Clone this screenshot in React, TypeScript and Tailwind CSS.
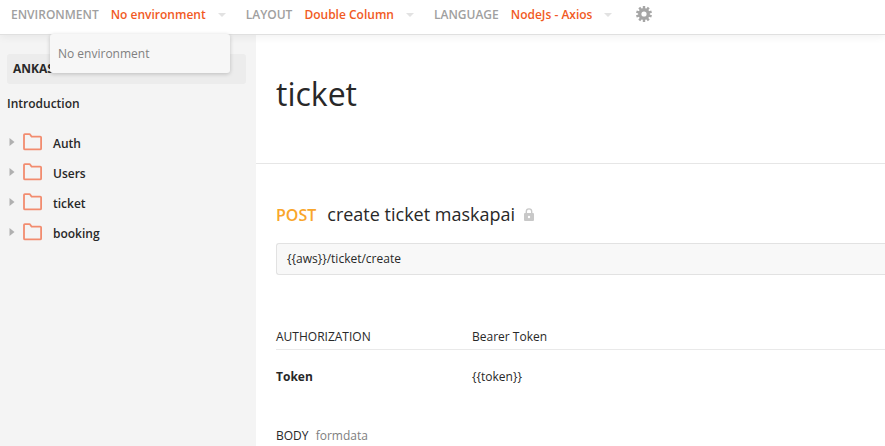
import type { ReactNode } from "react";

const folders = ["Auth", "Users", "ticket", "booking"];

function Caret() {
  return (
    <svg className="h-1 w-2 shrink-0" viewBox="0 0 8 4" fill="#e2e2e2" aria-hidden="true">
      <path d="M0 0h8L4 4z" />
    </svg>
  );
}

function Folder() {
  return (
    <svg className="h-[18px] w-5 shrink-0" viewBox="0 0 20 18" fill="none" stroke="#f28c6f" strokeWidth="1.8" aria-hidden="true">
      <path d="M1.8 1.2h4.6q.6 0 .9.5l1 1.5q.3.5.9.5h8q.9 0 .9.9v10.8q0 1-1 1H2q-1 0-1-1V2q0-.8.8-.8z" />
    </svg>
  );
}

function Gear() {
  return (
    <svg className="size-4" viewBox="0 0 16 16" fill="#a6a6a6" aria-hidden="true">
      <g>
        {[0, 36, 72, 108, 144].map((angle) => (
          <rect key={angle} x="6.8" y="0" width="2.4" height="16" transform={`rotate(${angle} 8 8)`} />
        ))}
      </g>
      <circle cx="8" cy="8" r="5.9" />
      <circle cx="8" cy="8" r="2.6" fill="#fff" />
    </svg>
  );
}

function Lock() {
  return (
    <svg className="h-[13px] w-[10px]" viewBox="0 0 10 13" role="img" aria-label="Requires authorization">
      <path d="M2.3 6V3.6a2.7 2.7 0 0 1 5.4 0V6" fill="none" stroke="#c8c8c8" strokeWidth="1.4" />
      <rect y="5" width="10" height="8" rx="1" fill="#c8c8c8" />
      <circle cx="5" cy="9" r="1.2" fill="#fff" />
    </svg>
  );
}

function Setting({ id, label, children }: { id: string; label: string; children: ReactNode }) {
  return (
    <div className="flex items-center">
      <label htmlFor={id} className="mr-3 font-semibold text-[#a0a0a0]">
        {label}
      </label>
      {children}
    </div>
  );
}

function Picker({ id, label, options }: { id: string; label: string; options: string[] }) {
  return (
    <Setting id={id} label={label}>
      <select
        id={id}
        defaultValue={options[0]}
        className="mr-3 cursor-pointer appearance-none field-sizing-content font-semibold text-[#f15a24]"
      >
        {options.map((option) => (
          <option key={option}>{option}</option>
        ))}
      </select>
      <Caret />
    </Setting>
  );
}

export default function App() {
  return (
    <div className="flex min-h-screen flex-col bg-white font-['Open_Sans','Noto_Sans',sans-serif] text-xs text-[#282828]">
      <header className="relative z-10 flex h-[35px] items-center gap-5 border-b border-[#e0e0e0] bg-white px-[11px] pb-1 whitespace-nowrap shadow-[0_2px_8px_rgba(0,0,0,0.06)]">
        <div className="relative">
          <Setting id="environment" label="ENVIRONMENT">
            <button
              id="environment"
              type="button"
              aria-haspopup="listbox"
              aria-expanded="true"
              className="flex cursor-pointer items-center gap-3 font-semibold text-[#f15a24]"
            >
              No environment
              <Caret />
            </button>
          </Setting>
          <ul
            role="listbox"
            aria-label="Environment"
            className="absolute top-full left-[39px] mt-[11px] w-[180px] rounded-[3px] bg-[#f7f7f7] pt-1 pb-[3px] shadow-[0_1px_4px_rgba(0,0,0,0.2)]"
          >
            <li role="option" aria-selected="true" className="cursor-pointer px-2 text-[#808080] leading-8">
              No environment
            </li>
          </ul>
        </div>
        <Picker id="layout" label="LAYOUT" options={["Double Column"]} />
        <Picker id="language" label="LANGUAGE" options={["NodeJs - Axios"]} />
        <button type="button" aria-label="Settings" className="ml-1 cursor-pointer pb-0.5">
          <Gear />
        </button>
      </header>

      <div className="flex flex-1">
        <aside className="w-64 shrink-0 bg-[#f4f4f4] pt-[19px] pr-2.5 pl-[7px]">
          <h2 className="rounded-[3px] bg-[#ececec] px-1.5 text-xs leading-[30px] font-bold">ANKASA</h2>
          <a href="#introduction" className="mt-2.5 block leading-5 font-semibold">
            Introduction
          </a>
          <nav aria-label="Folders" className="mt-3.5">
            <ul>
              {folders.map((name) => (
                <li key={name}>
                  <a href={`#${name}`} className="flex h-[30px] items-center pl-0.5 font-semibold">
                    <span className="flex items-center gap-2 pb-0.5">
                      <svg className="h-2 w-1.5 shrink-0" viewBox="0 0 6 8" fill="#b0b0b0" aria-hidden="true">
                        <path d="M0.5 0l5 4-5 4z" />
                      </svg>
                      <Folder />
                    </span>
                    <span className="ml-2.5 pt-0.5">{name}</span>
                  </a>
                </li>
              ))}
            </ul>
          </nav>
        </aside>

        <main className="min-w-0 flex-1">
          <div className="border-b border-[#e6e6e6] px-5 pt-[35px] pb-[45px]">
            <h1 className="text-[32px] leading-[48px]">ticket</h1>
          </div>
          <section className="pt-[38px] pl-5">
            <h2 className="flex items-baseline text-lg leading-6">
              <span className="mr-[11px] text-base leading-6 font-semibold text-[#f9a62b]">POST</span>
              create ticket maskapai
              <span className="ml-[9px] self-center">
                <Lock />
              </span>
            </h2>
            <div className="mt-4 rounded-l-[3px] border border-r-0 border-[#e2e2e2] bg-[#f8f8f8] px-2.5 leading-[30px]">
              {"{{aws}}/ticket/create"}
            </div>

            <table className="mt-[52px] w-full table-fixed text-left">
              <thead>
                <tr className="border-b border-[#e9e9e9]">
                  <th scope="col" className="w-[196px] pb-0.5 leading-5 font-normal">
                    AUTHORIZATION
                  </th>
                  <th scope="col" className="pb-0.5 leading-5 font-normal">
                    Bearer Token
                  </th>
                </tr>
              </thead>
              <tbody>
                <tr>
                  <th scope="row" className="pt-[17px] leading-5 font-bold">
                    Token
                  </th>
                  <td className="pt-[17px] leading-5">{"{{token}}"}</td>
                </tr>
              </tbody>
            </table>

            <h3 className="mt-[39px] leading-5">
              BODY <span className="ml-1 text-[#808080]">formdata</span>
            </h3>
          </section>
        </main>
      </div>
    </div>
  );
}
